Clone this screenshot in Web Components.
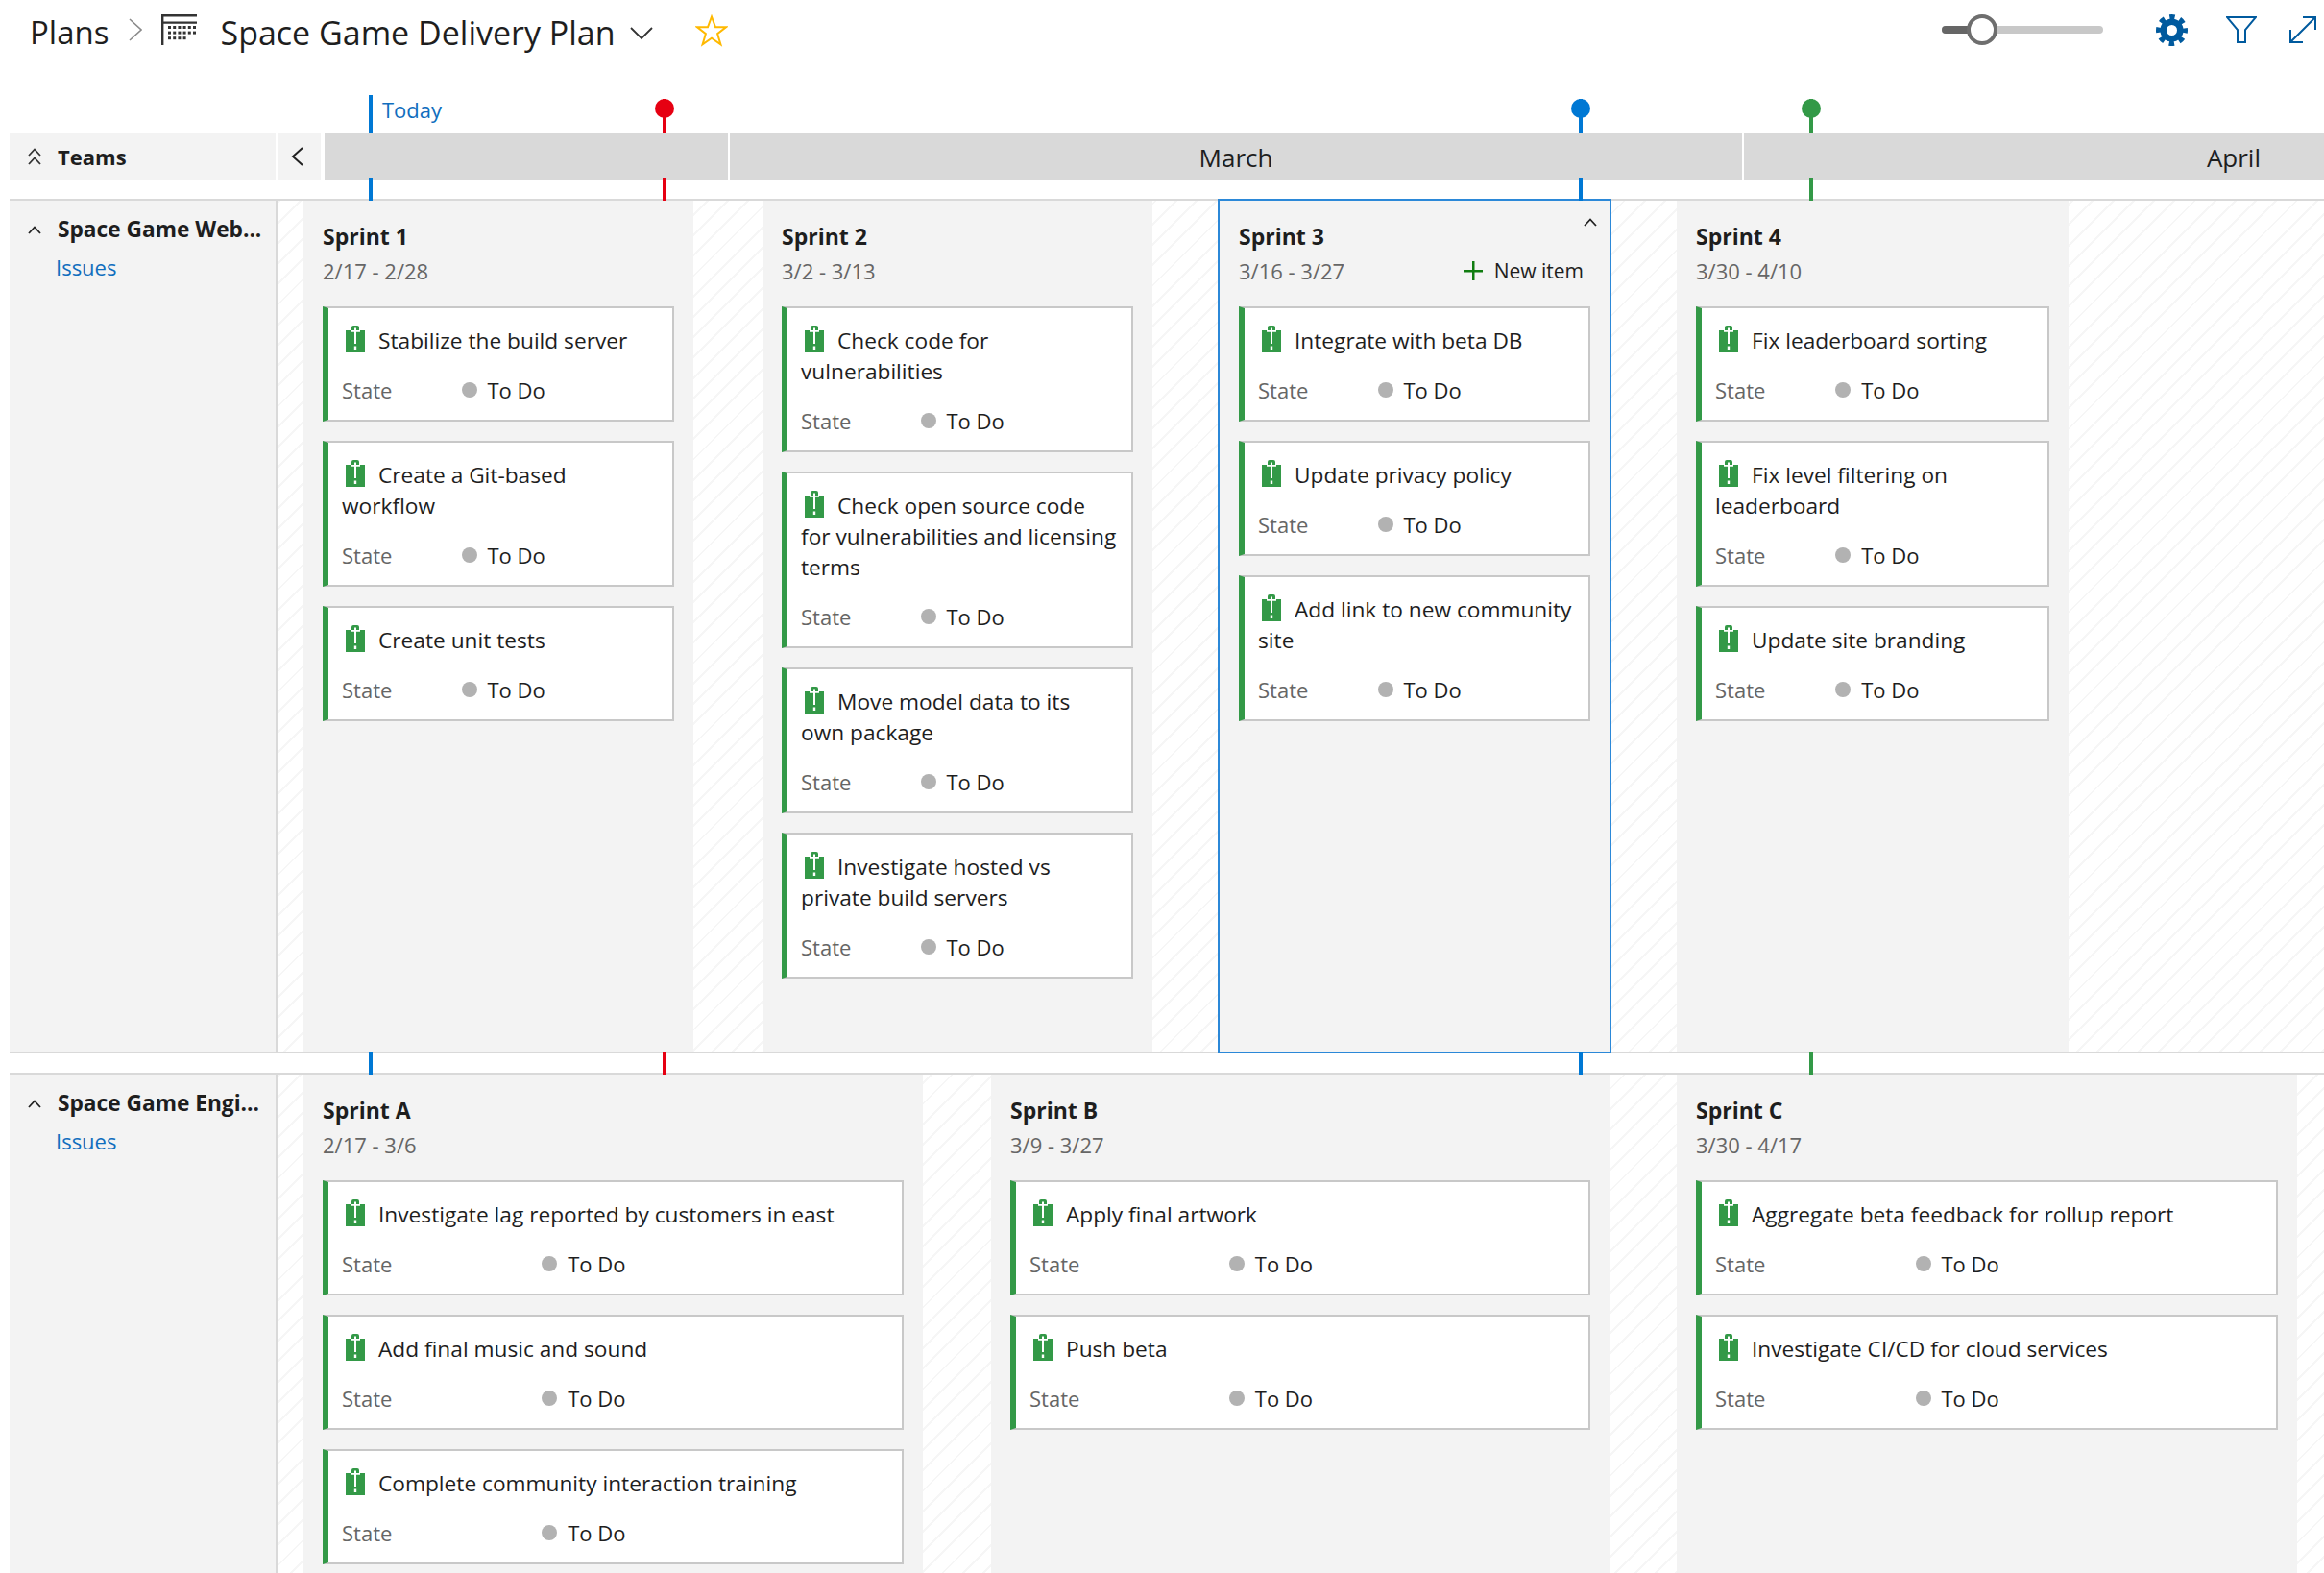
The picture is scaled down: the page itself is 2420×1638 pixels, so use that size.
<!DOCTYPE html>
<html lang="en">
<head>
<meta charset="utf-8">
<title>Space Game Delivery Plan</title>
<style>
  html, body {
    margin: 0;
    background: #fff;
    font-family: "Open Sans", "Noto Sans", sans-serif;
    color: #1e1e1e;
  }
</style>
</head>
<body>
<plan-app>
  <plan-toolbar></plan-toolbar>
  <timeline-ticks heads height="40"></timeline-ticks>
  <month-bar></month-bar>
  <timeline-ticks height="20"></timeline-ticks>

  <plan-row closed height="890">
    <team-panel slot="team" name="Space Game Web..."></team-panel>

    <plan-sprint name="Sprint 1" dates="2/17 - 2/28" style="width:406px;margin-left:26px">
      <plan-card>Stabilize the build server</plan-card>
      <plan-card>Create a Git-based workflow</plan-card>
      <plan-card>Create unit tests</plan-card>
    </plan-sprint>
    <plan-sprint name="Sprint 2" dates="3/2 - 3/13" style="width:406px;margin-left:72px">
      <plan-card>Check code for vulnerabilities</plan-card>
      <plan-card>Check open source code for vulnerabilities and licensing terms</plan-card>
      <plan-card>Move model data to its own package</plan-card>
      <plan-card>Investigate hosted vs private build servers</plan-card>
    </plan-sprint>
    <plan-sprint selected name="Sprint 3" dates="3/16 - 3/27" style="width:406px;margin-left:70px">
      <plan-card>Integrate with beta DB</plan-card>
      <plan-card>Update privacy policy</plan-card>
      <plan-card>Add link to new community site</plan-card>
    </plan-sprint>
    <plan-sprint name="Sprint 4" dates="3/30 - 4/10" style="width:408px;margin-left:70px">
      <plan-card>Fix leaderboard sorting</plan-card>
      <plan-card>Fix level filtering on leaderboard</plan-card>
      <plan-card>Update site branding</plan-card>
    </plan-sprint>
  </plan-row>

  <timeline-ticks height="20"></timeline-ticks>

  <plan-row height="521">
    <team-panel slot="team" name="Space Game Engi..."></team-panel>

    <plan-sprint name="Sprint A" dates="2/17 - 3/6" style="width:645px;margin-left:26px">
      <plan-card>Investigate lag reported by customers in east</plan-card>
      <plan-card>Add final music and sound</plan-card>
      <plan-card>Complete community interaction training</plan-card>
    </plan-sprint>
    <plan-sprint name="Sprint B" dates="3/9 - 3/27" style="width:644px;margin-left:71px">
      <plan-card>Apply final artwork</plan-card>
      <plan-card>Push beta</plan-card>
    </plan-sprint>
    <plan-sprint name="Sprint C" dates="3/30 - 4/17" style="width:646px;margin-left:70px">
      <plan-card>Aggregate beta feedback for rollup report</plan-card>
      <plan-card>Investigate CI/CD for cloud services</plan-card>
    </plan-sprint>
  </plan-row>
</plan-app>

<script>
  const TICKS = [
    { x: 384, color: "#0078d4", today: true },
    { x: 690, color: "#e60012" },
    { x: 1644, color: "#0078d4" },
    { x: 1883.5, color: "#339947" }
  ];

  class PlanApp extends HTMLElement {
    constructor() {
      super();
      this.attachShadow({ mode: "open" });
    }

    connectedCallback() {
      this.shadowRoot.innerHTML = `
        <style>
          :host {
            display: flex;
            flex-direction: column;
            width: 2420px;
            height: 1638px;
            overflow: hidden;
          }
        </style>
        <slot></slot>
      `;
    }
  }

  class PlanToolbar extends HTMLElement {
    constructor() {
      super();
      this.attachShadow({ mode: "open" });
    }

    connectedCallback() {
      let dots = "";
      [6, 6, 4].forEach((count, row) => {
        for (let i = 0; i < count; i++) {
          dots += `<rect x="${7 + i * 5.2}" y="${12 + row * 5.6}" width="3" height="3"/>`;
        }
      });

      this.shadowRoot.innerHTML = `
        <style>
          :host {
            display: flex;
            align-items: center;
            height: 62px;
            margin-bottom: 37px;
            padding-left: 31px;
            font-size: 33px;
            color: #1e1e1e;
          }
          .title { line-height: 44px; margin-top: 6px; white-space: nowrap; }
          .plan-name { font-size: 34px; }
          svg { display: block; flex: none; }
          .crumb { margin-left: 21px; }
          .plan-icon { margin-left: 20px; margin-right: 24px; }
          .caret { margin-left: 15px; margin-top: 7px; }
          .star { margin-left: 44px; margin-top: 1px; }
          .slider {
            position: relative;
            width: 168px;
            height: 8px;
            margin-left: auto;
            border-radius: 4px;
            background: #c8c8c8;
          }
          .slider .fill {
            width: 42px;
            height: 8px;
            border-radius: 4px 0 0 4px;
            background: #666;
          }
          .slider .thumb {
            position: absolute;
            left: 26px;
            top: -12px;
            width: 32px;
            height: 32px;
            box-sizing: border-box;
            border: 4px solid #6e6e6e;
            border-radius: 50%;
            background: #fff;
          }
          .gear { margin-left: 55px; }
          .funnel { margin-left: 40px; }
          .expand { margin-left: 34px; margin-right: 8px; }
        </style>
        <span class="title">Plans</span>
        <svg class="crumb" width="14" height="24" viewBox="0 0 14 24" fill="none" stroke="#8a8a8a" stroke-width="1.6"><path d="M1 1l12 11L1 23"/></svg>
        <svg class="plan-icon" width="37" height="32" viewBox="0 0 37 32" fill="#333">
          <path d="M0 0h37v2.400H2.400v5h34.600v2.400H2.400V32H0z"/>
          ${dots}
        </svg>
        <span class="title plan-name">Space Game Delivery Plan</span>
        <svg class="caret" width="24" height="14" viewBox="0 0 24 14" fill="none" stroke="#333" stroke-width="1.8"><path d="M1 1l11 11L23 1"/></svg>
        <svg class="star" width="34" height="34" viewBox="0 0 34 34" fill="none" stroke="#ffb900" stroke-width="2"><path d="M17 2.500l4 10.800h10.900l-8.800 6.800 3.300 11.200L17 24.700 7.600 31.300l3.300-11.200-8.800-6.800H13z"/></svg>
        <div class="slider"><div class="fill"></div><div class="thumb"></div></div>
        <svg class="gear" width="33" height="33" viewBox="0 0 33 33" fill="none" stroke="#005a9e">
          <circle cx="16.500" cy="16.500" r="8.800" stroke-width="6.600"/>
          <circle cx="16.500" cy="16.500" r="14" stroke-width="5" stroke-dasharray="5.500 5.500" stroke-dashoffset="2.750"/>
        </svg>
        <svg class="funnel" width="32" height="28" viewBox="0 0 32 28" fill="none" stroke="#005a9e" stroke-width="2"><path d="M1 1h30L20 14v13h-8V14z"/></svg>
        <svg class="expand" width="28" height="28" viewBox="0 0 28 28" fill="none" stroke="#005a9e" stroke-width="2"><path d="M14 1h13v13M27 1L1 27M1 14v13h13"/></svg>
      `;
    }
  }

  class TimelineTicks extends HTMLElement {
    constructor() {
      super();
      this.attachShadow({ mode: "open" });
    }

    connectedCallback() {
      const heads = this.hasAttribute("heads");
      const ticks = TICKS.map((tick) => {
        if (heads) {
          const top = tick.today ? 0 : 4;
          const head = tick.today ? "" : `<i class="head" style="background:${tick.color}"></i>`;
          return `<b class="tick" style="left:${tick.x}px;top:${top}px;bottom:0;background:${tick.color}">${head}</b>`;
        }
        return `<b class="tick" style="left:${tick.x}px;top:-2px;bottom:-2px;background:${tick.color}"></b>`;
      }).join("");

      this.shadowRoot.innerHTML = `
        <style>
          :host {
            display: block;
            position: relative;
            z-index: 2;
            flex: none;
            height: ${this.getAttribute("height")}px;
          }
          .tick { position: absolute; width: 4px; }
          .head {
            position: absolute;
            left: -8px;
            top: 0;
            width: 20px;
            height: 20px;
            border-radius: 50%;
          }
          .today {
            position: absolute;
            left: 398px;
            top: -1px;
            font-size: 22px;
            line-height: 32px;
            color: #106ebe;
          }
        </style>
        ${heads ? `<span class="today">Today</span>` : ""}
        ${ticks}
      `;
    }
  }

  class MonthBar extends HTMLElement {
    constructor() {
      super();
      this.attachShadow({ mode: "open" });
    }

    connectedCallback() {
      this.shadowRoot.innerHTML = `
        <style>
          :host {
            display: flex;
            flex: none;
            height: 48px;
            margin-left: 10px;
            font-size: 26px;
            line-height: 50px;
          }
          .teams {
            display: flex;
            align-items: center;
            width: 277px;
            background: #f3f3f3;
            font-size: 22px;
            line-height: 48px;
            font-weight: 700;
          }
          .teams svg { margin: 0 17px 0 19px; }
          .back {
            display: flex;
            align-items: center;
            justify-content: center;
            width: 39px;
            padding-right: 5px;
            margin-left: 3px;
            background: #f3f3f3;
          }
          .month {
            background: #d9d9d9;
            text-align: center;
            white-space: nowrap;
          }
          .first { width: 420px; margin-left: 4px; }
          .march { width: 1054px; margin-left: 2px; }
          .april { flex: 1; margin-left: 2px; text-align: right; padding-right: 66px; }
        </style>
        <div class="teams">
          <svg width="14" height="18" viewBox="0 0 14 18" fill="none" stroke="#333" stroke-width="1.800"><path d="M1 8l6-6.500L13 8M1 17l6-6.500L13 17"/></svg>
          Teams
        </div>
        <div class="back">
          <svg width="14" height="20" viewBox="0 0 14 20" fill="none" stroke="#222" stroke-width="2"><path d="M12 1L2 10l10 9"/></svg>
        </div>
        <div class="month first"></div>
        <div class="month march">March</div>
        <div class="month april">April</div>
      `;
    }
  }

  class PlanRow extends HTMLElement {
    constructor() {
      super();
      this.attachShadow({ mode: "open" });
    }

    connectedCallback() {
      const bottom = this.hasAttribute("closed") ? "border-bottom: 2px solid #d9d9d9;" : "";
      this.shadowRoot.innerHTML = `
        <style>
          :host {
            display: flex;
            flex: none;
            height: ${this.getAttribute("height")}px;
            box-sizing: border-box;
            padding-left: 10px;
          }
          .team {
            width: 279px;
            box-sizing: border-box;
            border-top: 2px solid #d9d9d9;
            ${bottom}
            border-right: 2px solid #d9d9d9;
            background: #f3f3f3;
          }
          .lane {
            display: flex;
            flex: 1;
            min-width: 0;
            margin-left: 1px;
            box-sizing: border-box;
            border-top: 2px solid #d9d9d9;
            ${bottom}
            background: repeating-linear-gradient(135deg, #f6f6f6 0 2px, #fff 2px 15px);
          }
        </style>
        <div class="team"><slot name="team"></slot></div>
        <div class="lane"><slot></slot></div>
      `;
    }
  }

  class TeamPanel extends HTMLElement {
    constructor() {
      super();
      this.attachShadow({ mode: "open" });
    }

    connectedCallback() {
      this.shadowRoot.innerHTML = `
        <style>
          :host { display: block; padding-top: 14px; font-size: 22.7px; line-height: 32px; }
          .name { display: flex; align-items: center; font-weight: 700; white-space: nowrap; }
          svg { flex: none; margin: 0 17px 0 19px; }
          .issues { display: block; margin: 7px 0 0 48px; font-size: 22px; color: #106ebe; }
        </style>
        <div class="name">
          <svg width="14" height="9" viewBox="0 0 14 9" fill="none" stroke="#222" stroke-width="1.800"><path d="M1 8l6-6.500L13 8"/></svg>
          ${this.getAttribute("name")}
        </div>
        <span class="issues">Issues</span>
      `;
    }
  }

  class PlanSprint extends HTMLElement {
    constructor() {
      super();
      this.attachShadow({ mode: "open" });
    }

    connectedCallback() {
      const selected = this.hasAttribute("selected");
      this.shadowRoot.innerHTML = `
        <style>
          :host {
            display: block;
            position: relative;
            flex: none;
            box-sizing: border-box;
            padding: 21px 20px 0;
            background: #f3f3f3;
            font-size: 22px;
            line-height: 32px;
            ${selected ? "outline: 2px solid #2b88d8; z-index: 1;" : ""}
          }
          .name { font-size: 23px; font-weight: 700; }
          .dates {
            display: flex;
            justify-content: space-between;
            margin: 4px 0 21px;
            color: #666;
          }
          .new {
            display: flex;
            align-items: center;
            gap: 12px;
            margin-right: 7px;
            font-size: 21px;
            color: #1e1e1e;
          }
          .collapse { position: absolute; right: 13px; top: 18px; }
          ::slotted(plan-card) { margin-bottom: 20px; }
        </style>
        <div class="name">${this.getAttribute("name")}</div>
        <div class="dates">
          <span>${this.getAttribute("dates")}</span>
          ${selected ? `<span class="new"><svg width="20" height="20" viewBox="0 0 20 20" fill="#107c10"><path d="M9 0h2.500v9H20v2.500h-8.500V20H9v-8.500H0V9h9z"/></svg>New item</span>` : ""}
        </div>
        ${selected ? `<svg class="collapse" width="14" height="9" viewBox="0 0 14 9" fill="none" stroke="#222" stroke-width="1.800"><path d="M1 8l6-6.500L13 8"/></svg>` : ""}
        <slot></slot>
      `;
    }
  }

  class PlanCard extends HTMLElement {
    constructor() {
      super();
      this.attachShadow({ mode: "open" });
    }

    connectedCallback() {
      this.shadowRoot.innerHTML = `
        <style>
          :host {
            display: block;
            box-sizing: border-box;
            padding: 18px 14px 15px 14px;
            background: #fff;
            border: 2px solid #c8c8c8;
            border-left: 6px solid #339947;
            font-size: 22.7px;
            line-height: 32px;
            color: #1e1e1e;
          }
          .title svg {
            display: inline-block;
            vertical-align: top;
            margin: 0 14px 0 4px;
          }
          .field { display: flex; align-items: center; margin-top: 19px; font-size: 22px; }
          .label { width: calc(35% + 9px); color: #666; }
          .dot {
            width: 16px;
            height: 16px;
            margin-right: 11px;
            border-radius: 50%;
            background: #b2b2b2;
          }
        </style>
        <div class="title">
          <svg width="20" height="28" viewBox="0 0 20 28">
            <path fill="#339947" d="M0 5h6V2a2 2 0 0 1 2-2h4a2 2 0 0 1 2 2v3h6v23H0z"/>
            <path fill="#fff" d="M9 2.500h2V5h4v1.800h-4V19H9V6.800H5V5h4zM8.800 21.500h2.400V25H8.800z"/>
          </svg><slot></slot>
        </div>
        <div class="field">
          <span class="label">State</span>
          <span class="dot"></span>
          <span>To Do</span>
        </div>
      `;
    }
  }

  customElements.define("plan-app", PlanApp);
  customElements.define("plan-toolbar", PlanToolbar);
  customElements.define("timeline-ticks", TimelineTicks);
  customElements.define("month-bar", MonthBar);
  customElements.define("plan-row", PlanRow);
  customElements.define("team-panel", TeamPanel);
  customElements.define("plan-sprint", PlanSprint);
  customElements.define("plan-card", PlanCard);
</script>
</body>
</html>
